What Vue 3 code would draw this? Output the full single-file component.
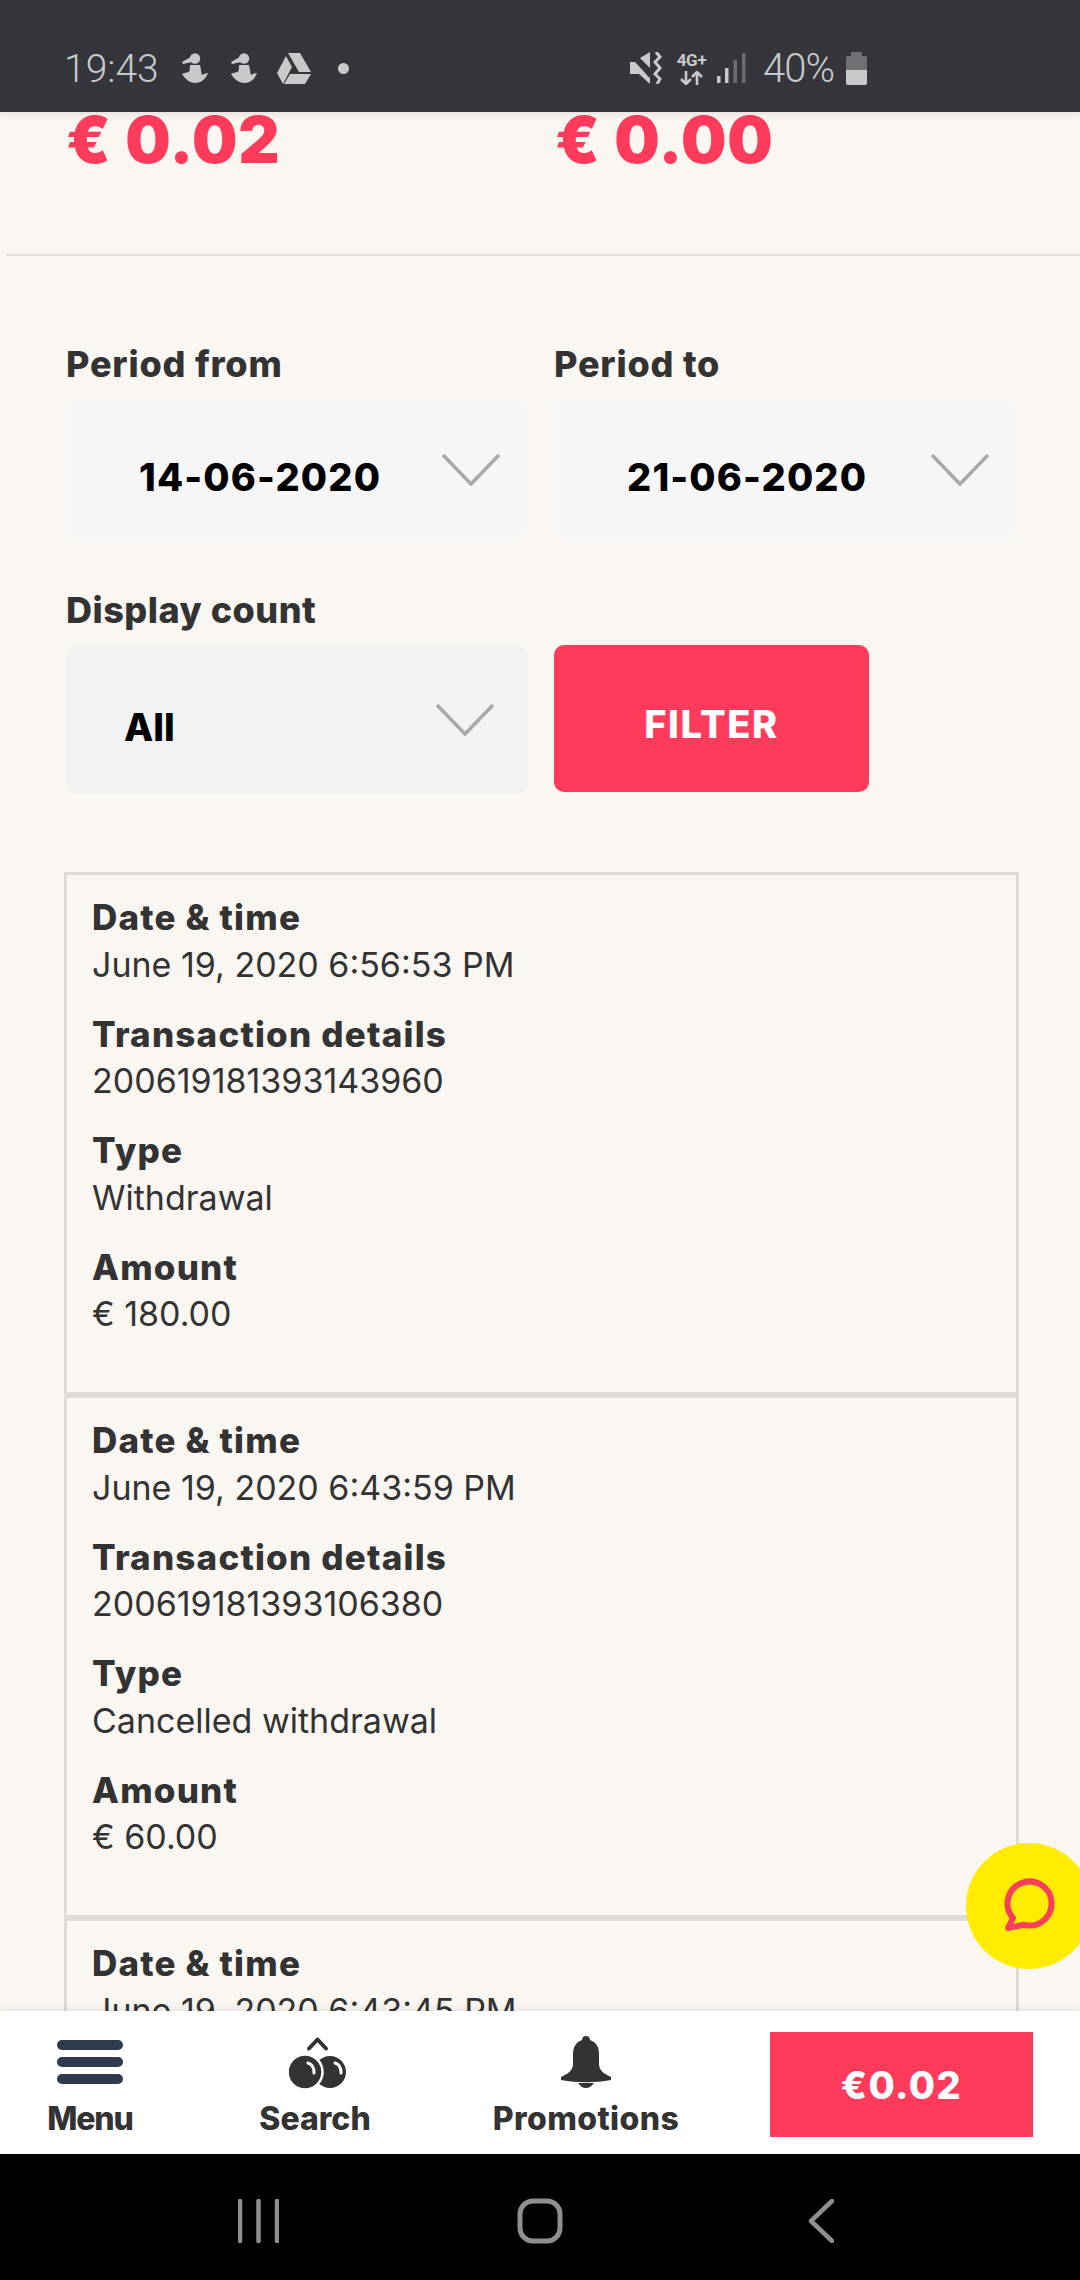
<script setup>
const cards = [
  { rows: [
    ['Date & time', 'June 19, 2020 6:56:53 PM'],
    ['Transaction details', '200619181393143960'],
    ['Type', 'Withdrawal'],
    ['Amount', '€ 180.00']
  ] },
  { rows: [
    ['Date & time', 'June 19, 2020 6:43:59 PM'],
    ['Transaction details', '200619181393106380'],
    ['Type', 'Cancelled withdrawal'],
    ['Amount', '€ 60.00']
  ] },
  { rows: [
    ['Date & time', 'June 19, 2020 6:43:45 PM']
  ] }
]
</script>

<template>
  <div class="screen">
    <header class="status">
      <span class="clock">19:43</span>
      <svg class="ic person first" width="26" height="30" viewBox="0 0 26 30"><circle cx="13" cy="5.500" r="5.200"/><path d="M8 4.500 0 9l1 2 9-2zM8 12h10c1 4 1 7 2 10 2-1 4-2 6-2-2 6-7 10-13 10-5 0-10-4-13-9 2-1 5-2 7-2 1-3 1-5 1-7z"/></svg>
      <svg class="ic person" width="26" height="30" viewBox="0 0 26 30"><circle cx="13" cy="5.500" r="5.200"/><path d="M8 4.500 0 9l1 2 9-2zM8 12h10c1 4 1 7 2 10 2-1 4-2 6-2-2 6-7 10-13 10-5 0-10-4-13-9 2-1 5-2 7-2 1-3 1-5 1-7z"/></svg>
      <svg class="ic drive" width="34" height="31" viewBox="0 0 34 31"><path d="M11 0h12l11 19H22zM9 3l6 11-9 17-6-11zM13 21h21l-6 10H7z"/></svg>
      <i class="dot"></i>
      <div class="status-right">
        <svg class="ic" width="32" height="32" viewBox="0 0 32 32"><path d="M0 10h5l15 15v7L9 22H0zM10 6l10-6v16z"/><path d="M1 3l19 22" stroke="#35363b" stroke-width="2"/><path d="M26 0l4 5-5 5 5 6-5 6 5 5-3 5" fill="none" stroke="#c8c9cb" stroke-width="3"/></svg>
        <div class="net"><span>4G+</span><svg width="24" height="14" viewBox="0 0 24 14"><path d="M6 0v12M1 8l5 5 5-5M17 14V2M12 6l5-5 5 5" fill="none" stroke="#c8c9cb" stroke-width="2.6"/></svg></div>
        <svg class="signal" width="29" height="30" viewBox="0 0 29 30"><rect x="0" y="23" width="3.5" height="7" fill="#c8c9cb"/><rect x="8" y="15" width="3.5" height="15" fill="#c8c9cb"/><rect x="16.500" y="7" width="3.500" height="23" fill="#6c6d70"/><rect x="25" y="0" width="3.500" height="30" fill="#6c6d70"/></svg>
        <span class="pct">40%</span>
        <div class="battery"><i class="nub"></i><i class="empty"></i><i class="full"></i></div>
      </div>
    </header>

    <main class="content">
      <div class="amounts"><span>€ 0.02</span><span>€ 0.00</span></div>
      <div class="rule"></div>

      <section class="form">
        <div class="field">
          <label>Period from</label>
          <div class="select date">
            <span>14-06-2020</span>
            <svg width="58" height="32" viewBox="0 0 58 32"><path d="M1 1l28 29L57 1"/></svg>
          </div>
        </div>
        <div class="field">
          <label>Period to</label>
          <div class="select date">
            <span>21-06-2020</span>
            <svg width="58" height="32" viewBox="0 0 58 32"><path d="M1 1l28 29L57 1"/></svg>
          </div>
        </div>
        <div class="field lower">
          <label>Display count</label>
          <div class="select count">
            <span>All</span>
            <svg width="58" height="32" viewBox="0 0 58 32"><path d="M1 1l28 29L57 1"/></svg>
          </div>
        </div>
        <div class="field lower filter-cell">
          <button class="filter"><span>FILTER</span></button>
        </div>
      </section>

      <section class="cards">
        <article v-for="(c, i) in cards" :key="i" class="card">
          <div v-for="r in c.rows" :key="r[0]" class="row"><b>{{ r[0] }}</b><span>{{ r[1] }}</span></div>
        </article>
      </section>

      <button class="fab" aria-label="Chat">
        <svg width="60" height="60" viewBox="0 0 60 60"><path d="M13 44A22 22 0 1 1 24 50.800L8 54z" fill="none" stroke="#f83f5a" stroke-width="6" stroke-linejoin="round"/></svg>
      </button>
    </main>

    <nav class="tabs">
      <a class="tab menu">
        <div class="tab-icon"><svg width="66" height="44" viewBox="0 0 66 44"><rect width="66" height="10" y="0" rx="5"/><rect width="66" height="10" y="17" rx="5"/><rect width="66" height="10" y="34" rx="5"/></svg></div>
        <span>Menu</span>
      </a>
      <a class="tab search">
        <div class="tab-icon"><svg width="58" height="54" viewBox="0 0 58 54"><path d="M20 12.500l8.500-9 8.500 9" fill="none" stroke="#333" stroke-width="4" stroke-linecap="round" stroke-linejoin="round"/><circle cx="41" cy="36" r="16" fill="#333"/><circle cx="16" cy="36" r="17.500" fill="#333" stroke="#fff" stroke-width="2.500"/><path d="M19 27c4 1 6 5 6 10M46 27c4 1 6 5 6 10" fill="none" stroke="#fff" stroke-width="3" stroke-linecap="round"/></svg></div>
        <span>Search</span>
      </a>
      <a class="tab promo">
        <div class="tab-icon"><svg width="52" height="54" viewBox="0 0 52 54"><path d="M26 0c3 0 4 2 4 4 6 2 9 7 9 14v10c0 6 5 10 12 13v3c-16 3-34 3-50 0v-3c7-3 12-7 12-13V18c0-7 3-12 9-14 0-2 1-4 4-4z" fill="#333"/><path d="M18 47h16c-2 3-5 5-8 5s-6-2-8-5z" fill="#333"/></svg></div>
        <span>Promotions</span>
      </a>
      <button class="balance">€0.02</button>
    </nav>

    <footer class="android">
      <svg width="41" height="44" viewBox="0 0 41 44"><path d="M2 2v40M20.500 2v40M39 2v40" fill="none" stroke="#8f8f8f" stroke-width="4.500" stroke-linecap="round"/></svg>
      <svg class="home" width="46" height="46" viewBox="0 0 46 46"><rect x="3" y="3" width="40" height="40" rx="13" fill="none" stroke="#8f8f8f" stroke-width="5"/></svg>
      <svg class="back" width="26" height="44" viewBox="0 0 26 44"><path d="M24 2 3 22l21 20" fill="none" stroke="#8f8f8f" stroke-width="4.500" stroke-linecap="round" stroke-linejoin="round"/></svg>
    </footer>
  </div>
</template>

<style>
html, body { margin: 0; background: #000; }
</style>

<style scoped>
* { box-sizing: border-box; }
.screen {
  width: 1080px; height: 2280px; display: flex; flex-direction: column; overflow: hidden;
  background: #faf7f2; font-family: Inter, "Liberation Sans", sans-serif; color: #333;
}
.status {
  height: 112px; flex: none; background: #35363b; display: flex; align-items: center;
  padding: 24px 0 0 64px; color: #c8c9cb; font-family: Roboto, sans-serif; position: relative; z-index: 2;
  box-shadow: 0 2px 8px rgba(0, 0, 0, .1);
}
.clock { font-size: 39px; font-weight: 300; width: 94px; padding-top: 2px; }
.ic { fill: #c8c9cb; flex: none; }
.person.first { margin-left: 24px; }
.person { margin-left: 23px; }
.drive { margin-left: 20px; }
.dot { width: 11px; height: 11px; border-radius: 50%; background: #c8c9cb; margin-left: 27px; }
.status-right { margin-left: auto; padding-right: 213px; display: flex; align-items: center; }
.net { margin-left: 14px; width: 31px; display: flex; flex-direction: column; align-items: center; line-height: 1; gap: 2px; }
.net span { font-size: 17px; font-weight: 700; white-space: nowrap; letter-spacing: -.3px; }
.signal { margin-left: 10px; }
.pct { font-size: 40px; margin-left: 17px; width: 70px; font-weight: 300; white-space: nowrap; letter-spacing: -1px; }
.battery { width: 21px; height: 33px; margin-left: 13px; display: flex; flex-direction: column; align-items: center; }
.battery i { display: block; }
.nub { width: 11px; height: 4px; background: #6f7073; border-radius: 1px 1px 0 0; }
.empty { width: 21px; height: 14px; background: #6f7073; border-radius: 2px 2px 0 0; }
.full { width: 21px; height: 15px; background: #c8c9cb; border-radius: 0 0 2px 2px; }

.content { flex: 1; min-height: 0; overflow: hidden; position: relative; }
.amounts {
  display: grid; grid-template-columns: 489px 1fr; padding-left: 66px; height: 56px; line-height: 56px;
  font-size: 64px; font-weight: 900; color: #ff3b5c; letter-spacing: .8px;
}
.rule { height: 2px; margin: 86px 0 0 6px; background: #e3e0dc; }
.form { display: grid; grid-template-columns: 462px 463px; column-gap: 26px; padding-left: 66px; margin-top: 85px; }
.field label { display: block; font-size: 36px; font-weight: 800; line-height: 46px; margin-bottom: 13px; letter-spacing: .8px; white-space: nowrap; }
.field.lower { margin-top: 47px; }
.field.lower label { letter-spacing: .5px; }
.select { display: flex; justify-content: space-between; align-items: center; border-radius: 10px; color: #000; font-weight: 800; }
.select svg { flex: none; }
.select path { fill: none; stroke: #a8a8a8; stroke-width: 3.500; }
.select span { padding-top: 14px; }
.date { height: 140px; background: #f6f6f6; padding: 0 28px 0 73px; font-size: 38px; letter-spacing: 1.150px; }
.count { height: 147px; background: #f2f2f2; padding: 0 34px 0 58px; font-size: 38px; }
.filter-cell { display: flex; align-items: flex-end; }
.filter {
  width: 315px; height: 147px; margin-bottom: 1px; border: 0; border-radius: 10px; background: #ff3b5c; color: #fff;
  font: 800 38px Inter, sans-serif; letter-spacing: 1.5px; padding: 10px 0 0;
}

.cards { margin: 79px 61px 0 64px; }
.card { border: 3px solid #dedbd8; height: 523px; padding: 19px 25px 0; }
.row { margin-bottom: 23.500px; display: flex; flex-direction: column; font-size: 34px; }
.row b { font-weight: 800; font-size: 35px; letter-spacing: 1.200px; line-height: 47.500px; }
.row span { font-weight: 400; letter-spacing: 0; line-height: 45.500px; }

.fab {
  position: absolute; left: 966px; top: 1731px; width: 126px; height: 126px; border: 0; border-radius: 50%;
  background: #ffec00; display: flex; padding: 31px 0 0 34px;
}

.tabs { height: 143px; flex: none; background: #fff; display: flex; position: relative; box-shadow: 0 -2px 8px rgba(0, 0, 0, .08); }
.tab { display: flex; flex-direction: column; align-items: center; padding-top: 25px; font-size: 32px; font-weight: 800; line-height: 36px; }
.tab-icon { height: 65px; }
.tab-icon svg { display: block; }
.menu { width: 180px; letter-spacing: -1.200px; }
.menu .tab-icon { padding-top: 4px; }
.menu svg { fill: #2f3b4d; }
.search { width: 270px; }
.search .tab-icon { padding-left: 6px; }
.promo { width: 272px; letter-spacing: .4px; }
.balance {
  width: 263px; height: 105px; margin: 21px 0 0 48px; border: 0; background: #ff3b5c; color: #fff;
  font: 800 38px Inter, sans-serif; letter-spacing: 1.500px; padding: 0;
}
.android { height: 126px; flex: none; background: #000; display: flex; padding: 8px 0 0 238px; align-items: center; }
.home { margin-left: 238px; }
.back { margin-left: 245px; }
</style>
